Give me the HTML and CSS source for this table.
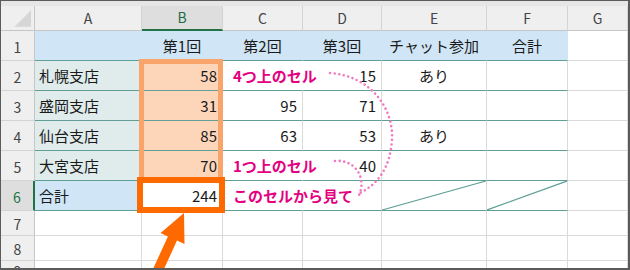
FILE: index.html
```html
<!DOCTYPE html>
<html lang="ja">
<head>
<meta charset="utf-8">
<title>Sheet</title>
<link rel="stylesheet" href="styles.css">
</head>
<body>
<div class="frame">
  <div class="strip"></div>
  <div class="sheet">
    <div class="c corner"><svg class="tri" viewBox="0 0 34 25"><polygon points="14,21 31,4 31,21"/></svg></div>
    <div class="c ch">A</div>
    <div class="c ch sel">B</div>
    <div class="c ch">C</div>
    <div class="c ch">D</div>
    <div class="c ch">E</div>
    <div class="c ch">F</div>
    <div class="c ch">G</div>

    <div class="c rh">1</div>
    <div class="c t hd"></div>
    <div class="c t hd">第1回</div>
    <div class="c t hd">第2回</div>
    <div class="c t hd">第3回</div>
    <div class="c t hd">チャット参加</div>
    <div class="c t hd">合計</div>
    <div class="c"></div>

    <div class="c rh">2</div>
    <div class="c t lbl">札幌支店</div>
    <div class="c t num peach">58</div>
    <div class="c t ov"><span class="note">4つ上のセル</span></div>
    <div class="c t num">15</div>
    <div class="c t ctr">あり</div>
    <div class="c t"></div>
    <div class="c"></div>

    <div class="c rh">3</div>
    <div class="c t lbl">盛岡支店</div>
    <div class="c t num peach">31</div>
    <div class="c t num">95</div>
    <div class="c t num">71</div>
    <div class="c t"></div>
    <div class="c t"></div>
    <div class="c"></div>

    <div class="c rh">4</div>
    <div class="c t lbl">仙台支店</div>
    <div class="c t num peach">85</div>
    <div class="c t num">63</div>
    <div class="c t num">53</div>
    <div class="c t ctr">あり</div>
    <div class="c t"></div>
    <div class="c"></div>

    <div class="c rh">5</div>
    <div class="c t lbl">大宮支店</div>
    <div class="c t num peach">70</div>
    <div class="c t ov"><span class="note">1つ上のセル</span></div>
    <div class="c t num">40</div>
    <div class="c t"></div>
    <div class="c t"></div>
    <div class="c"></div>

    <div class="c rh sel">6</div>
    <div class="c t tot">合計</div>
    <div class="c t num">244</div>
    <div class="c t ov"><span class="note">このセルから見て</span></div>
    <div class="c t"></div>
    <div class="c t diagcell"><svg class="diag" viewBox="0 0 100 100" preserveAspectRatio="none"><line x1="0" y1="100" x2="100" y2="0"/></svg></div>
    <div class="c t diagcell"><svg class="diag" viewBox="0 0 100 100" preserveAspectRatio="none"><line x1="0" y1="100" x2="100" y2="0"/></svg></div>
    <div class="c"></div>

    <div class="c rh">7</div>
    <div class="c"></div><div class="c"></div><div class="c"></div><div class="c"></div><div class="c"></div><div class="c"></div><div class="c"></div>

    <div class="c rh">8</div>
    <div class="c"></div><div class="c"></div><div class="c"></div><div class="c"></div><div class="c"></div><div class="c"></div><div class="c"></div>

    <div class="c rh">9</div>
    <div class="c"></div><div class="c"></div><div class="c"></div><div class="c"></div><div class="c"></div><div class="c"></div><div class="c"></div>
  </div>

  <svg class="overlay" viewBox="0 0 630 270" width="630" height="270">
    <rect class="soft" x="141.5" y="61.5" width="79" height="119"/>
    <rect class="hard" x="140" y="180" width="82" height="30"/>
    <path class="dots" d="M330,73 C372,76 394,110 392,140 C390,168 378,184 360,193"/>
    <path class="dots" d="M335,161 C355,159 367,178 359,195"/>
    <polygon class="arrow" points="184,213 184.5,244 177,240.6 160.3,277 151.3,272.8 167.9,236.4 160.6,233"/>
  </svg>
</div>
</body>
</html>
```

FILE: styles.css
```css
html, body {
  margin: 0;
  padding: 0;
  background: #ffffff;
}

.frame {
  position: relative;
  width: 630px;
  height: 270px;
  box-sizing: border-box;
  border: 1px solid #5b5b5b;
  border-right-width: 2px;
  border-bottom-width: 2px;
  background: #ffffff;
  display: flex;
  flex-direction: column;
  overflow: hidden;
}

.strip {
  flex: none;
  height: 5px;
  background: #e6e6e6;
}

.sheet {
  flex: 1;
  display: grid;
  grid-template-columns: 34px 107px 81px 80px 79px 105px 81px 1fr;
  grid-template-rows: 25px repeat(6, 30px) 25px 25px 1fr;
  font-family: "Noto Sans CJK JP", "Noto Sans", sans-serif;
  font-size: 15px;
  color: #1a1a1a;
}

.c {
  box-sizing: border-box;
  min-width: 0;
  border-right: 1px solid #dadada;
  border-bottom: 1px solid #dadada;
  display: flex;
  align-items: center;
  padding: 0 4px 1px 4px;
  white-space: nowrap;
  line-height: 1;
}

.corner {
  background: #efefef;
  border-right-color: #c6c6c6;
  border-bottom-color: #c6c6c6;
  padding: 0;
}

.tri {
  width: 34px;
  height: 25px;
  display: block;
}

.tri polygon {
  fill: #d6d6d6;
}

.ch {
  background: #efefef;
  justify-content: center;
  font-size: 14px;
  color: #444444;
  border-right-color: #d4d4d4;
  border-bottom-color: #c6c6c6;
}

.ch.sel {
  background: #dedede;
  color: #1f6b43;
  border-bottom: 2px solid #217346;
}

.rh {
  background: #efefef;
  justify-content: center;
  font-size: 14px;
  color: #444444;
  padding-top: 3px;
  border-right-color: #c6c6c6;
  border-bottom-color: #d4d4d4;
}

.rh.sel {
  background: #dedede;
  color: #217346;
  border-right: 2px solid #217346;
}

.t {
  border-bottom-color: #5f9f95;
}

.hd {
  background: #d0e5f5;
  border-right-color: #d0e5f5;
  justify-content: center;
}

.lbl {
  background: #dfeceb;
}

.tot {
  background: #d0e5f5;
}

.peach {
  background: #fdd6ba;
}

.num {
  justify-content: flex-end;
  padding-right: 5px;
}

.ctr {
  justify-content: center;
}

.ov {
  border-right-color: transparent;
  padding-left: 10px;
}

.note {
  color: #e4007f;
  font-weight: 700;
  font-size: 15px;
}

.diagcell {
  padding: 0;
}

.diag {
  display: block;
  width: 100%;
  height: 100%;
}

.diag line {
  stroke: #5f9f95;
  stroke-width: 1.2;
  vector-effect: non-scaling-stroke;
}

.overlay {
  position: absolute;
  top: -1px;
  left: -1px;
  width: 630px;
  height: 270px;
  pointer-events: none;
}

.soft {
  fill: none;
  stroke: #f8a46a;
  stroke-width: 5;
}

.hard {
  fill: none;
  stroke: #ff6a00;
  stroke-width: 6;
}

.dots {
  fill: none;
  stroke: #f17ac0;
  stroke-width: 2.6;
  stroke-linecap: round;
  stroke-dasharray: 0 4.6;
}

.arrow {
  fill: #ff6a00;
}
```
